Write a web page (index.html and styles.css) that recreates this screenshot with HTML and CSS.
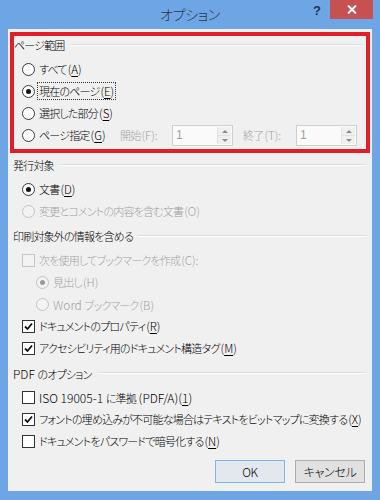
FILE: index.html
```html
<!DOCTYPE html>
<html lang="ja">
<head>
    <meta charset="UTF-8">
    <title>オプション</title>
    <link rel="stylesheet" href="styles.css">
</head>
<body>
    <div class="window">
        <div class="titlebar">
            <div></div>
            <div class="title">オプション</div>
            <div class="controls">
                <span class="help">?</span>
                <span class="close">
                    <svg width="10" height="9" viewBox="0 0 10 9"><path d="M1 0.5 L9 8.5 M9 0.5 L1 8.5" stroke="#fff" stroke-width="2"/></svg>
                </span>
            </div>
        </div>

        <div class="client">
            <!-- ページ範囲 -->
            <div class="group range">
                <div class="group-head"><span>ページ範囲</span></div>
                <div class="rows">
                    <div class="row"><span class="radio"></span><span>すべて<span class="key">(<u>A</u>)</span></span></div>
                    <div class="row"><span class="radio on"></span><span class="focus">現在のページ<span class="key">(<u>E</u>)</span></span></div>
                    <div class="row"><span class="radio"></span><span>選択した部分<span class="key">(<u>S</u>)</span></span></div>
                    <div class="row">
                        <span class="pick"><span class="radio"></span><span>ページ指定<span class="key">(<u>G</u>)</span></span></span>
                        <span class="spin-label dim">開始<span class="key">(F):</span></span>
                        <span class="spin"><span class="spin-val">1</span><span class="spin-btns"><i class="up"></i><i class="down"></i></span></span>
                        <span class="spin-label dim end">終了<span class="key">(T):</span></span>
                        <span class="spin"><span class="spin-val">1</span><span class="spin-btns"><i class="up"></i><i class="down"></i></span></span>
                    </div>
                </div>
            </div>

            <!-- 発行対象 -->
            <div class="group first">
                <div class="group-head"><span>発行対象</span></div>
                <div class="rows">
                    <div class="row"><span class="radio on"></span><span>文書<span class="key">(<u>D</u>)</span></span></div>
                    <div class="row dim"><span class="radio off"></span><span>変更とコメントの内容を含む文書<span class="key">(O)</span></span></div>
                </div>
            </div>

            <!-- 印刷対象外の情報 -->
            <div class="group">
                <div class="group-head"><span>印刷対象外の情報を含める</span></div>
                <div class="rows">
                    <div class="row dim"><span class="check off"></span><span>次を使用してブックマークを作成<span class="key">(C):</span></span></div>
                    <div class="row dim sub"><span class="radio off on"></span><span>見出し<span class="key">(H)</span></span></div>
                    <div class="row dim sub"><span class="radio off"></span><span><span class="en">Word </span>ブックマーク<span class="key">(B)</span></span></div>
                    <div class="row"><span class="check on"><svg width="9" height="9" viewBox="0 0 9 9"><path d="M1 4.5 L3.5 7 L8 1.5" fill="none" stroke="#111" stroke-width="1.8"/></svg></span><span>ドキュメントのプロパティ<span class="key">(<u>R</u>)</span></span></div>
                    <div class="row"><span class="check on"><svg width="9" height="9" viewBox="0 0 9 9"><path d="M1 4.5 L3.5 7 L8 1.5" fill="none" stroke="#111" stroke-width="1.8"/></svg></span><span>アクセシビリティ用のドキュメント構造タグ<span class="key">(<u>M</u>)</span></span></div>
                </div>
            </div>

            <!-- PDF のオプション -->
            <div class="group">
                <div class="group-head"><span><span class="en">PDF </span>のオプション</span></div>
                <div class="rows">
                    <div class="row"><span class="check"></span><span><span class="en">ISO 19005-1 </span>に準拠<span class="en"> (PDF/A)(<u>1</u>)</span></span></div>
                    <div class="row"><span class="check on"><svg width="9" height="9" viewBox="0 0 9 9"><path d="M1 4.5 L3.5 7 L8 1.5" fill="none" stroke="#111" stroke-width="1.8"/></svg></span><span>フォントの埋め込みが不可能な場合はテキストをビットマップに変換する<span class="key">(<u>X</u>)</span></span></div>
                    <div class="row"><span class="check"></span><span>ドキュメントをパスワードで暗号化する<span class="key">(<u>N</u>)</span></span></div>
                </div>
            </div>

            <div class="buttons">
                <button class="btn default">OK</button>
                <button class="btn">キャンセル</button>
            </div>
        </div>
    </div>
</body>
</html>
```

FILE: styles.css
```css
/* ページ全体 */
html, body {
    margin: 0;
    background: #6ea5e4;
}

body {
    width: 380px;
    height: 500px;
    font-family: "Noto Sans CJK JP", "Noto Sans", sans-serif;
    font-size: 11px;
    font-weight: 300;
    letter-spacing: -0.8px;
    font-feature-settings: "palt";
    color: #000;
}

/* 欧文部分は詰めない */
.en {
    font-size: 12px;
    letter-spacing: 0;
}

.key {
    font-size: 11.5px;
    letter-spacing: 0;
    margin-left: 1px;
}

/* タイトルバー */
.titlebar {
    height: 29px;
    display: grid;
    grid-template-columns: 1fr auto 1fr;
}

.title {
    font-size: 14px;
    letter-spacing: -0.3px;
    line-height: 29px;
    color: #2a3440;
}

.controls {
    display: flex;
    justify-content: flex-end;
    align-items: flex-start;
    padding-right: 7px;
}

.help {
    margin-top: 3px;
    margin-right: 9px;
    font-family: "Liberation Sans", sans-serif;
    font-weight: bold;
    font-size: 13px;
    letter-spacing: 0;
    color: #1d3657;
}

.close {
    width: 43px;
    height: 19px;
    background: #c75050;
    display: flex;
    align-items: center;
    justify-content: center;
}

/* クライアント領域 */
.client {
    margin: 0 8px 0 8px;
    height: 462px;
    box-sizing: border-box;
    background: #f0f0f0;
    padding: 0 0 8px;
    display: flex;
    flex-direction: column;
}

/* グループ */
.group {
    margin: 5px 5px 0;
}

.group.first {
    margin-top: 3px;
}

.range {
    margin: 3px 2px 0;
    border: 4px solid #e01f2b;
    padding: 0 0 3px;
}

.group-head {
    height: 18px;
    display: flex;
    align-items: center;
    gap: 5px;
}

.group-head::after {
    content: "";
    flex: 1;
    height: 1px;
    background: #dcdcdc;
    border-bottom: 1px solid #fff;
}

.range .group-head::after {
    margin-right: 3px;
}

.rows {
    padding-top: 4px;
}

/* 行 */
.row {
    height: 22px;
    display: flex;
    align-items: center;
    padding-left: 9px;
    gap: 4px;
    white-space: nowrap;
}

.range .row {
    padding-left: 8px;
}

.row.sub {
    padding-left: 23px;
}

.dim,
.row.dim {
    color: #a2a2a2;
}

u {
    text-decoration-thickness: 1px;
    text-underline-offset: 2px;
}

.focus {
    outline: 1px dotted #333;
    outline-offset: 0;
    padding: 0 1px;
    margin-left: -1px;
    line-height: 16px;
}

/* ラジオボタン */
.radio {
    width: 11px;
    height: 11px;
    border: 1px solid #3a3a3a;
    border-radius: 50%;
    background: #fff;
    display: flex;
    align-items: center;
    justify-content: center;
    flex: none;
}

.radio.on::after {
    content: "";
    width: 5px;
    height: 5px;
    border-radius: 50%;
    background: #111;
}

.radio.off {
    border-color: #c4c4c4;
    background: #f3f3f3;
}

.radio.off.on::after {
    background: #9a9a9a;
}

/* チェックボックス */
.check {
    width: 11px;
    height: 11px;
    border: 1px solid #333;
    background: #fff;
    display: flex;
    align-items: center;
    justify-content: center;
    flex: none;
}

.check.off {
    border-color: #c4c4c4;
    background: #f3f3f3;
}

/* ページ指定の行 */
.pick {
    display: flex;
    align-items: center;
    gap: 4px;
    width: 98px;
}

.spin-label {
    width: 52px;
    margin-left: -4px;
}

.spin-label.end {
    width: 53px;
    margin-left: 6px;
}

.spin {
    width: 61px;
    height: 21px;
    margin-left: -4px;
    box-sizing: border-box;
    border: 1px solid #cfcfcf;
    background: #fafafa;
    display: flex;
}

.spin-val {
    flex: 1;
    padding-left: 3px;
    line-height: 19px;
    color: #a2a2a2;
    font-family: "Liberation Sans", sans-serif;
    font-size: 12px;
}

.spin-btns {
    width: 13px;
    margin: 1px 1px 1px 0;
    display: flex;
    flex-direction: column;
    background: #f0f0f0;
    border-left: 1px solid #e2e2e2;
}

.spin-btns i {
    flex: 1;
    position: relative;
}

.spin-btns i::after {
    content: "";
    position: absolute;
    left: 4px;
    border-left: 3px solid transparent;
    border-right: 3px solid transparent;
}

.spin-btns .up {
    border-bottom: 1px solid #e2e2e2;
}

.spin-btns .up::after {
    top: 3px;
    border-bottom: 3px solid #8a8a8a;
}

.spin-btns .down::after {
    top: 3px;
    border-top: 3px solid #8a8a8a;
}

/* ボタン */
.buttons {
    margin-top: auto;
    display: flex;
    justify-content: flex-end;
    gap: 10px;
    padding-right: 7px;
}

.btn {
    width: 70px;
    height: 23px;
    font-family: inherit;
    font-size: 12px;
    font-weight: 300;
    letter-spacing: -0.3px;
    font-feature-settings: "palt";
    color: #000;
    background: #e1e1e1;
    border: 1px solid #acacac;
    padding: 0;
}

.btn.default {
    border-color: #7eb4ea;
    background: #e3e8ee;
}
```
